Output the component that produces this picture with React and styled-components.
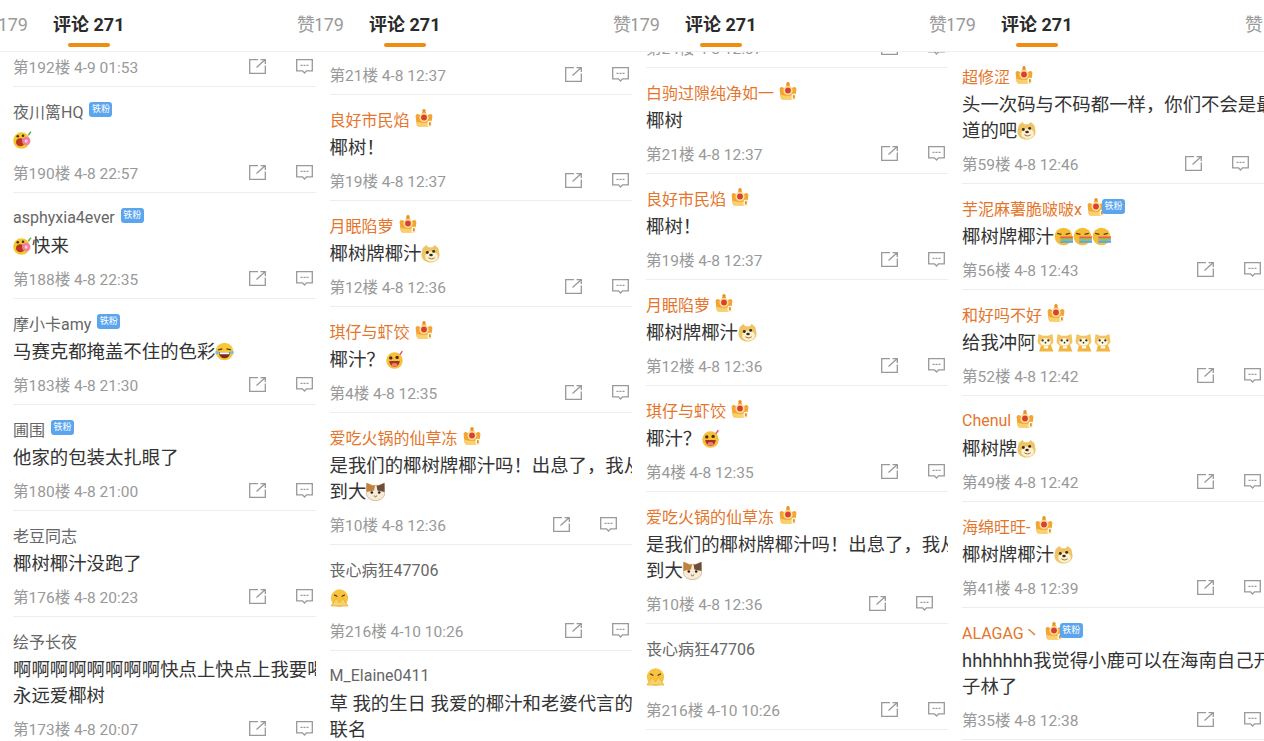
import React from "react";
import styled, { createGlobalStyle } from "styled-components";

const Share = () => (
  <ActionIcon viewBox="0 0 17 15">
    <path d="M9 .7H.7V14.3H16.3V6.5" />
    <path d="M7.5 8.5L15.8 1M11.5 .7H16.3V5" />
  </ActionIcon>
);

const Reply = () => (
  <ActionIcon viewBox="0 0 17 15">
    <path d="M.7 .7H16.3V11.8H10.5L8.5 14L6.5 11.8H.7Z" />
    <path d="M4.5 6.3H12.5" strokeDasharray="2 1" />
  </ActionIcon>
);

const Crown = () => (
  <CrownMark viewBox="0 0 18 18">
    <path d="M.6 7C.8 4.8 3.2 4.4 4.4 5.8L6 6.5L7.5 2.5H10.5L12 6.5L13.6 5.8C14.8 4.4 17.2 4.8 17.4 7L16.4 15.5C16.2 16.8 15 17.6 14 17.6H4C3 17.6 1.8 16.8 1.6 15.5Z" fill="#f3a531" />
    <path d="M2 12.8C5 14.2 13 14.2 16 12.8L15.8 16C15.6 17 15 17.6 14 17.6H4C3 17.6 2.4 17 2.2 16Z" fill="#fbd06a" />
    <circle cx="9" cy="8.5" r="4.6" fill="#fbe0a0" />
    <circle cx="9" cy="8.5" r="2.9" fill="#d8412f" />
    <circle cx="9" cy="1.8" r="1.7" fill="#ee8f24" />
    <rect x="12.6" y="11.8" width="4.6" height="6" rx="1" fill="#fff5dc" />
    <rect x="14.1" y="13.2" width="1.6" height="3.2" fill="#c98a2a" />
  </CrownMark>
);

const faces = {
  flower: (
    <>
      <circle cx="8" cy="10" r="7.8" fill="#f6c62f" />
      <ellipse cx="7" cy="11.5" rx="4.2" ry="3.8" fill="#b8391f" />
      <circle cx="12.5" cy="10.5" r="4" fill="#f27f9f" />
      <circle cx="12.5" cy="10.5" r="1.5" fill="#fcd2dc" />
      <circle cx="4.5" cy="6" r="1.2" fill="#4a2a12" />
      <circle cx="9.5" cy="5.5" r="1.2" fill="#4a2a12" />
      <path d="M14.5 5L17 1.5" stroke="#63b04a" strokeWidth="1.4" />
    </>
  ),
  laugh: (
    <>
      <circle cx="9" cy="9" r="8.4" fill="#f6c93b" />
      <path d="M3 7.5L7 6.5M15 7.5L11 6.5" stroke="#5b3a12" strokeWidth="1.2" />
      <path d="M3.5 9.5H14.5C14 14 11.5 15.5 9 15.5S4 14 3.5 9.5Z" fill="#7a2d1c" />
      <path d="M4.2 9.8H13.8L13.5 11.5H4.5Z" fill="#fff" />
      <circle cx="1.8" cy="10" r="1.6" fill="#6fc1ee" />
      <circle cx="16.2" cy="10" r="1.6" fill="#6fc1ee" />
    </>
  ),
  doge: (
    <>
      <path d="M1.5 4L5 1L7 3H11L13 1L16.5 4L17.6 10C17.6 15 13.5 17.6 9 17.6S.4 15 .4 10Z" fill="#efc465" />
      <ellipse cx="10" cy="12" rx="6" ry="4.8" fill="#fbf1d3" />
      <circle cx="6" cy="8" r="1.4" fill="#3a2a18" />
      <circle cx="12" cy="7" r="1.4" fill="#3a2a18" />
      <ellipse cx="9.5" cy="10.5" rx="1.7" ry="1.2" fill="#3a2a18" />
      <path d="M7 13C9 14.5 11 14.5 13 13" stroke="#a3672b" strokeWidth="0.9" fill="none" />
    </>
  ),
  tongue: (
    <>
      <circle cx="9" cy="10" r="7.8" fill="#f6c13a" />
      <circle cx="5.5" cy="7.5" r="1.6" fill="#4a2a12" />
      <circle cx="11.5" cy="7" r="1.6" fill="#4a2a12" />
      <path d="M4 10.5H14C13.5 14.5 11 16 9 16S4.5 14.5 4 10.5Z" fill="#a8341e" />
      <ellipse cx="9" cy="14" rx="2.8" ry="1.8" fill="#ef7f7a" />
      <path d="M14 4.5L16.5 1" stroke="#d9546a" strokeWidth="1.3" />
    </>
  ),
  cat: (
    <>
      <path d="M.6 1L6 3.2H12L17.4 1L17.8 10C17.8 15 13.5 17.6 9 17.6S.2 15 .2 10Z" fill="#f7ead6" stroke="#c99a63" strokeWidth="0.6" />
      <path d="M.6 1L6 3.2H8.6L7.6 8L.4 9.5Z" fill="#c0823f" />
      <path d="M17.4 1L12 3.2H10L10.8 8L17.6 9.5Z" fill="#6a4e38" />
      <circle cx="5.5" cy="10" r="1.2" fill="#2e2018" />
      <circle cx="12.5" cy="10" r="1.2" fill="#2e2018" />
      <path d="M7.5 13L9 14L10.5 13" stroke="#8a5a3a" strokeWidth="0.9" fill="none" />
    </>
  ),
  sad: (
    <>
      <circle cx="9" cy="9.5" r="8.2" fill="#f8c440" />
      <path d="M4 6.5L7 8M14 6.5L11 8" stroke="#5b3a12" strokeWidth="1.2" />
      <path d="M1 17L6 9.5L9 14L12 9.5L17 17Z" fill="#f7d36c" stroke="#e8a52a" strokeWidth="0.7" />
    </>
  ),
  rainbow: (
    <>
      <circle cx="9" cy="9" r="8.4" fill="#f5bd35" />
      <path d="M3 6L7 7M11 7L15 6" stroke="#5b3a12" strokeWidth="1.2" />
      <path d="M6 9H18V11H6Z" fill="#ee5b55" />
      <path d="M6 11H18V13H6Z" fill="#7cc96a" />
      <path d="M6 13H18V15H6Z" fill="#5aa5ee" />
    </>
  ),
  shiba: (
    <>
      <path d="M5 11H14L16.5 17.6H3Z" fill="#f2b53e" />
      <rect x="7.5" y="11" width="4" height="3.6" fill="#fff" />
      <path d="M2.5 1L6.5 2.5H11.5L15.5 1L16.5 7.5C16.5 10.5 13.5 12.5 9 12.5S1.5 10.5 1.5 7.5Z" fill="#f3c45f" />
      <ellipse cx="9" cy="8.5" rx="5" ry="3.6" fill="#fff7e2" />
      <circle cx="6.3" cy="7" r="1.1" fill="#3a2a18" />
      <circle cx="11.7" cy="7" r="1.1" fill="#3a2a18" />
      <circle cx="9" cy="9.2" r="0.8" fill="#3a2a18" />
    </>
  ),
};

const E = ({ k }) => <Emoji viewBox="0 0 18 18">{faces[k]}</Emoji>;

const columns = [
  {
    inset: 13,
    pad: -5,
    rows: [
      { meta: "第192楼 4-9 01:53" },
      { name: "夜川篱HQ", fan: true, body: [[<E k="flower" />]], meta: "第190楼 4-8 22:57" },
      { name: "asphyxia4ever", fan: true, body: [[<E k="flower" />, "快来"]], meta: "第188楼 4-8 22:35" },
      { name: "摩小卡amy", fan: true, body: [["马赛克都掩盖不住的色彩", <E k="laugh" />]], meta: "第183楼 4-8 21:30" },
      { name: "圃围", fan: true, body: [["他家的包装太扎眼了"]], meta: "第180楼 4-8 21:00" },
      { name: "老豆同志", body: [["椰树椰汁没跑了"]], meta: "第176楼 4-8 20:23" },
      { name: "绘予长夜", body: [["啊啊啊啊啊啊啊啊快点上快点上我要喝"], ["永远爱椰树"]], meta: "第173楼 4-8 20:07" },
    ],
  },
  {
    inset: 13.5,
    pad: 3,
    rows: [
      { meta: "第21楼 4-8 12:37" },
      { name: "良好市民焰", vip: true, body: [["椰树！"]], meta: "第19楼 4-8 12:37" },
      { name: "月眠陷萝", vip: true, body: [["椰树牌椰汁", <E k="doge" />]], meta: "第12楼 4-8 12:36" },
      { name: "琪仔与虾饺", vip: true, body: [["椰汁？", <E k="tongue" />]], meta: "第4楼 4-8 12:35" },
      { name: "爱吃火锅的仙草冻", vip: true, wide: true, body: [["是我们的椰树牌椰汁吗！出息了，我从小"], ["到大", <E k="cat" />]], meta: "第10楼 4-8 12:36" },
      { name: "丧心病狂47706", body: [[<E k="sad" />]], meta: "第216楼 4-10 10:26" },
      { name: "M_Elaine0411", body: [["草 我的生日 我爱的椰汁和老婆代言的"], ["联名"]] },
    ],
  },
  {
    pad: -24,
    rows: [
      { meta: "第24楼 4-8 12:37" },
      { name: "白驹过隙纯净如一", vip: true, body: [["椰树"]], meta: "第21楼 4-8 12:37" },
      { name: "良好市民焰", vip: true, body: [["椰树！"]], meta: "第19楼 4-8 12:37" },
      { name: "月眠陷萝", vip: true, body: [["椰树牌椰汁", <E k="doge" />]], meta: "第12楼 4-8 12:36" },
      { name: "琪仔与虾饺", vip: true, body: [["椰汁？", <E k="tongue" />]], meta: "第4楼 4-8 12:35" },
      { name: "爱吃火锅的仙草冻", vip: true, wide: true, body: [["是我们的椰树牌椰汁吗！出息了，我从小"], ["到大", <E k="cat" />]], meta: "第10楼 4-8 12:36" },
      { name: "丧心病狂47706", body: [[<E k="sad" />]], meta: "第216楼 4-10 10:26" },
    ],
  },
  {
    pad: 0,
    rows: [
      { name: "超修涩", vip: true, wide: true, body: [["头一次码与不码都一样，你们不会是最"], ["道的吧", <E k="doge" />]], meta: "第59楼 4-8 12:46" },
      { name: "芋泥麻薯脆啵啵x", vip: true, fan: true, body: [["椰树牌椰汁", <E k="rainbow" />, <E k="rainbow" />, <E k="rainbow" />]], meta: "第56楼 4-8 12:43" },
      { name: "和好吗不好", vip: true, body: [["给我冲阿", <E k="shiba" />, <E k="shiba" />, <E k="shiba" />, <E k="shiba" />]], meta: "第52楼 4-8 12:42" },
      { name: "Chenul", vip: true, body: [["椰树牌", <E k="doge" />]], meta: "第49楼 4-8 12:42" },
      { name: "海绵旺旺-", vip: true, body: [["椰树牌椰汁", <E k="doge" />]], meta: "第41楼 4-8 12:39" },
      { name: "ALAGAG丶", vip: true, fan: true, body: [["hhhhhhh我觉得小鹿可以在海南自己开"], ["子林了"]], meta: "第35楼 4-8 12:38" },
    ],
  },
];

const Comment = ({ row, inset }) => (
  <Row $inset={inset}>
    {row.name && (
      <NameLine>
        <Name $vip={row.vip}>{row.name}</Name>
        {row.vip && <Crown />}
        {row.fan && <FanBadge $afterCrown={row.vip}>铁粉</FanBadge>}
      </NameLine>
    )}
    {row.body && row.body.map((line, i) => (
      <BodyLine key={i}>
        {line.map((part, j) => <React.Fragment key={j}>{part}</React.Fragment>)}
      </BodyLine>
    ))}
    {row.meta && (
      <Meta $wide={row.wide}>
        <span>{row.meta}</span>
        <Actions>
          <Share />
          <Reply />
        </Actions>
      </Meta>
    )}
  </Row>
);

const App = () => (
  <Page>
    <GlobalStyle />
    {columns.map((col, i) => (
      <Column key={i}>
        <Tabs>
          <Tab $side="end">赞179</Tab>
          <ActiveTab>评论 271</ActiveTab>
          <Tab $side="start">赞179</Tab>
        </Tabs>
        <ListClip>
          <List $pad={col.pad}>
            {col.rows.map((row, j) => (
              <Comment key={j} row={row} inset={col.inset} />
            ))}
          </List>
        </ListClip>
      </Column>
    ))}
  </Page>
);

export default App;

const GlobalStyle = createGlobalStyle`
  html, body {
    margin: 0;
    background: #fff;
    overflow: hidden;
  }
  * {
    box-sizing: border-box;
  }
`;

const Page = styled.div`
  display: grid;
  grid-template-columns: repeat(4, 316px);
  height: 741px;
  overflow: hidden;
  font-family: Roboto, "Noto Sans CJK SC", sans-serif;
`;

const Column = styled.section`
  display: flex;
  flex-direction: column;
  height: 741px;
  overflow: hidden;
`;

const Tabs = styled.header`
  display: grid;
  grid-template-columns: 53px 244px 19px;
  flex: 0 0 52px;
  border-bottom: 1px solid #f0f0f0;
  font-size: 18px;
  line-height: 50px;
  white-space: nowrap;
`;

const Tab = styled.div`
  color: #9a9a9a;
  justify-self: ${(p) => p.$side};
  padding-right: ${(p) => (p.$side === "end" ? "25px" : "0")};
`;

const ActiveTab = styled.div`
  position: relative;
  justify-self: start;
  color: #2b2b2b;
  font-weight: 700;
  &::after {
    content: "";
    position: absolute;
    left: 15px;
    top: 43px;
    width: 42px;
    height: 4px;
    border-radius: 2px;
    background: #f08c12;
  }
`;

const ListClip = styled.div`
  flex: 1;
  overflow: hidden;
`;

const List = styled.div`
  margin-top: ${(p) => Math.min(p.$pad, 0)}px;
  padding-top: ${(p) => Math.max(p.$pad, 0)}px;
`;

const Row = styled.article`
  margin-left: ${(p) => p.$inset || 14}px;
  padding-bottom: 10px;
  border-bottom: 1px solid #eeeeee;
  white-space: nowrap;
`;

const NameLine = styled.div`
  display: flex;
  align-items: center;
  height: 26px;
  margin-top: 11px;
  margin-bottom: 3px;
`;

const Name = styled.span`
  font-size: 16px;
  color: ${(p) => (p.$vip ? "#e5752b" : "#666666")};
`;

const CrownMark = styled.svg`
  width: 18px;
  height: 18px;
  margin-left: 5px;
  margin-top: -2px;
  flex: none;
`;

const FanBadge = styled.span`
  display: inline-block;
  width: 23px;
  height: 15px;
  margin-left: ${(p) => (p.$afterCrown ? "-3px" : "6px")};
  margin-top: -3px;
  border-radius: 3px;
  background: #5aa5ee;
  color: #fff;
  font-size: 9px;
  line-height: 15px;
  text-align: center;
`;

const BodyLine = styled.div`
  font-size: 18.4px;
  line-height: 26px;
  height: 26px;
  color: #333333;
`;

const Emoji = styled.svg`
  display: inline-block;
  width: 19px;
  height: 19px;
  vertical-align: -3px;
`;

const Meta = styled.div`
  display: flex;
  align-items: center;
  justify-content: space-between;
  height: 20px;
  margin-top: 9px;
  padding-right: ${(p) => (p.$wide ? "15px" : "3px")};
  font-size: 15.5px;
  color: #999999;
`;

const Actions = styled.div`
  display: flex;
  gap: 30px;
`;

const ActionIcon = styled.svg`
  width: 17px;
  height: 15px;
  fill: none;
  stroke: #999999;
  stroke-width: 1.3;
`;
